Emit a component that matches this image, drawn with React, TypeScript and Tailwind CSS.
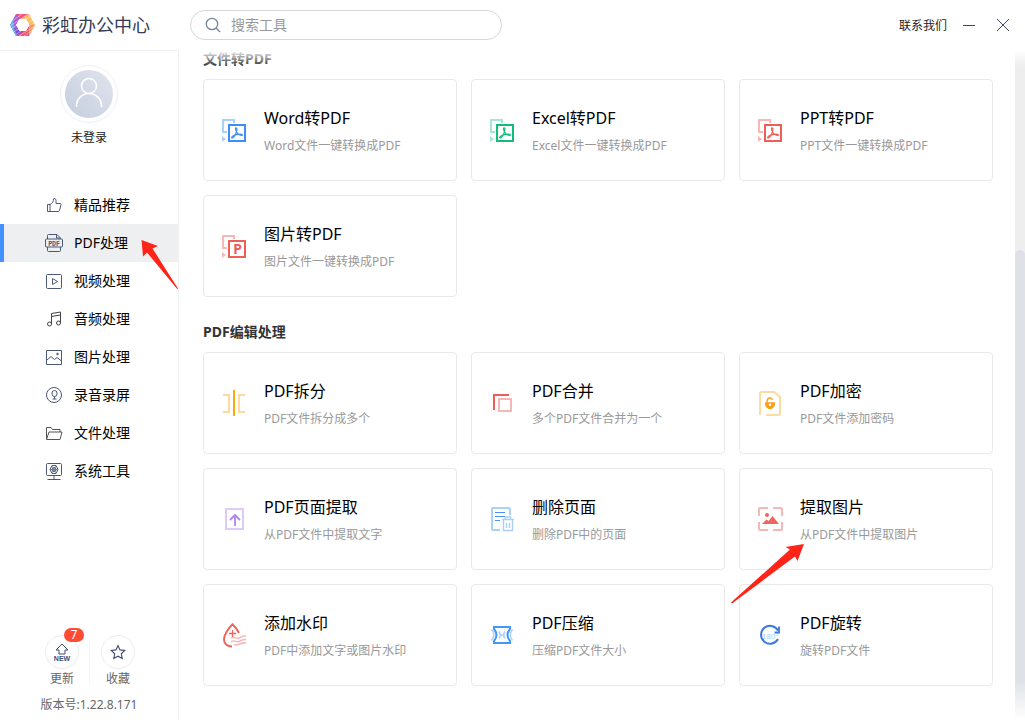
import React from "react";

type IconProps = { children: React.ReactNode };

function ToolIcon({ children }: IconProps) {
  return (
    <svg className="mt-[11px] size-[26px] shrink-0" viewBox="0 0 26 26" fill="none" aria-hidden="true">
      {children}
    </svg>
  );
}

function NavIcon({ children }: IconProps) {
  return (
    <svg className="size-[18px] shrink-0" viewBox="0 0 18 18" fill="none" stroke="#4b5877" strokeWidth="1" aria-hidden="true">
      {children}
    </svg>
  );
}

function ConvertIcon({ color, light, letter }: { color: string; light: string; letter?: boolean }) {
  return (
    <ToolIcon>
      <path d="M5 15H1V3h11v3" stroke={light} strokeWidth="2" />
      <path d="M0 19l4 3-4 3z" fill={light} />
      <rect x="7" y="8" width="16" height="16" stroke={color} strokeWidth="2" />
      {letter ? (
        <text x="15.500" y="21" textAnchor="middle" fill={color} fontSize="14" fontWeight="700" fontFamily="Noto Sans, sans-serif">P</text>
      ) : (
        <path
          d="M14 10.800c1.700 0 .9 3.300-.2 5.600-1.100 2.400-2.700 4.800-3.800 4.600-1.200-.3.500-2.300 3.600-3.200 3-.9 6.800-1.100 6.800.1 0 1.300-3.300.3-5-1.800-1.500-1.900-2.500-5.300-1.400-5.300z"
          stroke={color}
          strokeWidth="1.200"
        />
      )}
    </ToolIcon>
  );
}

function SplitIcon() {
  return (
    <ToolIcon>
      <path d="M1 5h6v17H1M23 5h-6v17h6" stroke="#fddba0" strokeWidth="2" />
      <path d="M12 0v26" stroke="#f8ab10" strokeWidth="2" />
    </ToolIcon>
  );
}

function MergeIcon() {
  return (
    <ToolIcon>
      <path d="M4 20V5h15" stroke="#ee5d56" strokeWidth="2" />
      <rect x="9" y="9" width="12" height="12" stroke="#f8b7b7" strokeWidth="2" />
    </ToolIcon>
  );
}

function EncryptIcon() {
  return (
    <ToolIcon>
      <path d="M2 24V3.500Q2 2 3.500 2H16l6 5v16.500q0 1.500-1.500 1.500H9" stroke="#fddba0" strokeWidth="2" strokeLinecap="round" />
      <path d="M9.200 12.500v-1.800c0-3.300 4.800-3.500 5.300-.7" stroke="#fb9f13" strokeWidth="1.400" />
      <path fillRule="evenodd" d="M7 12.200h10v1.600a5 5.400 0 0 1-10 0zM12 13.500a1.300 1.300 0 1 0 0 2.600 1.300 1.300 0 0 0 0-2.600z" fill="#fb9f13" />
    </ToolIcon>
  );
}

function ExtractPageIcon() {
  return (
    <ToolIcon>
      <rect x="4" y="3" width="17" height="20" stroke="#dfcafa" strokeWidth="2" />
      <path d="M13 20V9.500M8 14l5-5 5 5" stroke="#b383f3" strokeWidth="1.800" />
    </ToolIcon>
  );
}

function DeletePageIcon() {
  return (
    <ToolIcon>
      <path d="M10 24H3q-1 0-1-1V3q0-1 1-1h16q1 0 1 1v6" stroke="#a9d0fa" strokeWidth="2" />
      <path d="M5 6.500h10M5 10.500h10M5 14.500h5" stroke="#4a90f5" strokeWidth="1.200" />
      <path d="M12 13.500h12M15.500 13v-2h5v2M13.500 14v10.500h9V14M16.500 17v5M19.500 17v5" stroke="#a9d0fa" strokeWidth="1.400" />
    </ToolIcon>
  );
}

function ExtractImageIcon() {
  return (
    <ToolIcon>
      <path d="M1 10V3q0-1 1-1h8M15 2h8q1 0 1 1v7M24 16v7q0 1-1 1h-8M10 24H2q-1 0-1-1v-7" stroke="#f8b7b7" strokeWidth="2" />
      <circle cx="9" cy="9" r="2" fill="#f0655c" />
      <path d="M4 18l4.500-4.500 2 1.500L14.500 10l6.500 8z" fill="#f0655c" />
    </ToolIcon>
  );
}

function WatermarkIcon() {
  return (
    <ToolIcon>
      <path d="M10 24.500C5 24.500 2 21.500 2 17.500 2 13 6.500 6 10.500 2.200 13 4.500 15.500 8 17 11" stroke="#f0625a" strokeWidth="1.900" />
      <path d="M10.500 8v7M7 11.500h7" stroke="#f0625a" strokeWidth="1.300" />
      <path d="M9 16c4-1.500 5 1 8 0s3-2.500 7-2M9 19.500c4-1.500 5 1 8 0s3-2.500 7-2M12 23c3-.5 4 0 6-1s3-1.500 6-1" stroke="#f8b7b7" strokeWidth="1.500" />
    </ToolIcon>
  );
}

function CompressIcon() {
  return (
    <ToolIcon>
      <path d="M1.500 7.500q4.500 5.500 0 11M22.500 7.500q-4.500 5.500 0 11M9 9.500q2.500 3.500 0 7M15 9.500q-2.500 3.500 0 7M10.500 13h3" stroke="#a9d0fa" strokeWidth="1.500" />
      <path d="M4 5h16v2q-5 6 0 12v2H4v-2q5-6 0-12z" stroke="#4397f7" strokeWidth="2" />
    </ToolIcon>
  );
}

function RotateIcon() {
  return (
    <ToolIcon>
      <text x="4" y="16.500" fill="#a9d0fa" fontSize="8" fontFamily="Liberation Sans, sans-serif">180°</text>
      <path d="M20 8.500A9 9 0 1 0 20 17" stroke="#3b78e7" strokeWidth="2" />
      <path d="M21 4.500v7M21.500 10.500h-5" stroke="#3b78e7" strokeWidth="1.800" />
    </ToolIcon>
  );
}

function Logo() {
  return (
    <svg className="h-[22px] w-[25px] shrink-0" viewBox="0 0 25 22" fill="none" aria-hidden="true">
      <path d="M6 0h13l-3 5H9.500L6.500 9z" fill="#f0577c" />
      <path d="M19 0l6 11-4.500 2.500L16 5h-5z" fill="#fbbd62" />
      <path d="M25 11l-6 11h-4l.5-5 3.500-7z" fill="#f9965a" />
      <path d="M19 22H6l3-5h7l3-5z" fill="#ef5270" />
      <path d="M6 22L0 11l5-2 4.500 8h4z" fill="#7a4de0" />
      <path d="M0 11L6 0l3.500 5L6 11.500 8 17z" fill="#a95bd8" />
      <path d="M0 11l3-5.500 1 9 3 7.500H6z" fill="#56b8f0" />
      <path d="M0 8.500L12 0M0 12L18 0M1 15L22 1M3 18.500L24 5M5 21l20-13M9 22l16-10M14 22l10-7" stroke="#fff" strokeWidth=".7" opacity=".6" />
      <path d="M9.500 5H16l3.500 6-3.500 6H9.500L6 11z" fill="#fff" />
    </svg>
  );
}

const navItems: { label: string; active?: boolean; icon: React.ReactNode }[] = [
  {
    label: "精品推荐",
    icon: <path d="M2.500 8.500h2.500v7H2.500zM5 8.500c2.500-1 3.500-3 3.500-5.500 0-1 2.500-1 2.500 1.500V7.500h4q1 0 1 1l-1.500 6q-.3 1-1.500 1H5" />,
  },
  {
    label: "PDF处理",
    active: true,
    icon: (
      <>
        <path d="M2.500 5V1.500q0-1 1-1H12l3.500 3.500v1M11.500.5V4H15M2.500 13v3.500q0 1 1 1h11q1 0 1-1V13" />
        <rect x=".5" y="5" width="17" height="8" rx="1" />
        <text x="9" y="11.500" textAnchor="middle" fill="#4b5877" stroke="none" fontSize="6.500" fontWeight="700" fontFamily="Liberation Mono, monospace">PDF</text>
      </>
    ),
  },
  {
    label: "视频处理",
    icon: (
      <>
        <rect x="1.500" y="2.500" width="15" height="14" rx="1" />
        <path d="M7.500 6.500v6l5-3z" />
      </>
    ),
  },
  {
    label: "音频处理",
    icon: (
      <g stroke="#444">
        <path d="M6.500 13.500v-10l9-1.500v10.500M6.500 6.500l9-1.500" />
        <circle cx="4.500" cy="14" r="2" />
        <circle cx="13.500" cy="13" r="2" />
      </g>
    ),
  },
  {
    label: "图片处理",
    icon: (
      <>
        <path d="M1.500 2.500h15v14h-15zM2 12l4-3.500 3.500 3 2.500-2 4.500 3.500" />
        <circle cx="12.500" cy="6" r=".8" fill="#4b5877" />
      </>
    ),
  },
  {
    label: "录音录屏",
    icon: (
      <>
        <circle cx="9" cy="9" r="7.500" />
        <rect x="7" y="4.500" width="5" height="6" rx="2.500" />
        <path d="M9.500 10.500v2.500M7.500 13h4" />
      </>
    ),
  },
  {
    label: "文件处理",
    icon: <path stroke="#555" d="M1.500 15V3.500h4.500l1.500 2h7.500V8M1.500 15.500l2.500-7.500h13l-2 7.500z" />,
  },
  {
    label: "系统工具",
    icon: (
      <>
        <rect x="1.500" y="1.500" width="15" height="12" rx="1" />
        <path d="M9 13.500v3.500M2.500 17.500h13M7 3.500h4l2 4-2 4H7l-2-4z" />
        <circle cx="9" cy="7.500" r="2" />
        <path d="M5 7.500h8M7 4l4 7M11 4l-4 7" strokeWidth=".6" />
      </>
    ),
  },
];

type Tool = { title: string; desc: string; icon: React.ReactNode; pointed?: boolean };

const convertTools: Tool[] = [
  { title: "Word转PDF", desc: "Word文件一键转换成PDF", icon: <ConvertIcon color="#3b8ff5" light="#a9d0fa" /> },
  { title: "Excel转PDF", desc: "Excel文件一键转换成PDF", icon: <ConvertIcon color="#12bd7c" light="#a6e6cc" /> },
  { title: "PPT转PDF", desc: "PPT文件一键转换成PDF", icon: <ConvertIcon color="#ee5d56" light="#f8b7b7" /> },
  { title: "图片转PDF", desc: "图片文件一键转换成PDF", icon: <ConvertIcon color="#ee5d56" light="#f8b7b7" letter /> },
];

const editTools: Tool[] = [
  { title: "PDF拆分", desc: "PDF文件拆分成多个", icon: <SplitIcon /> },
  { title: "PDF合并", desc: "多个PDF文件合并为一个", icon: <MergeIcon /> },
  { title: "PDF加密", desc: "PDF文件添加密码", icon: <EncryptIcon /> },
  { title: "PDF页面提取", desc: "从PDF文件中提取文字", icon: <ExtractPageIcon /> },
  { title: "删除页面", desc: "删除PDF中的页面", icon: <DeletePageIcon /> },
  { title: "提取图片", desc: "从PDF文件中提取图片", icon: <ExtractImageIcon />, pointed: true },
  { title: "添加水印", desc: "PDF中添加文字或图片水印", icon: <WatermarkIcon /> },
  { title: "PDF压缩", desc: "压缩PDF文件大小", icon: <CompressIcon /> },
  { title: "PDF旋转", desc: "旋转PDF文件", icon: <RotateIcon /> },
];

function ToolCard({ tool }: { tool: Tool }) {
  return (
    <button type="button" className="relative flex items-start gap-4 rounded border border-[#e9e9ea] bg-white pt-[26px] pb-[25px] pl-[18px] text-left">
      {tool.icon}
      <span className="flex flex-col gap-[7px]">
        <span className="text-base leading-6 text-black">{tool.title}</span>
        <span className="text-xs leading-[18px] text-[#999]">{tool.desc}</span>
      </span>
      {tool.pointed && (
        <svg className="pointer-events-none absolute top-[75px] -left-[9px] z-10 h-[60px] w-[73px]" viewBox="0 0 73 60" aria-hidden="true">
          <path d="M73 0L54.500 3l4.500 2.500L0 58.500l1 1L64 12.500l2.500 4.500z" fill="#ff2418" />
        </svg>
      )}
    </button>
  );
}

function Section({ title, tools }: { title: string; tools: Tool[] }) {
  return (
    <section>
      <h2 className="mb-[11px] text-sm leading-[18px] font-bold text-[#333]">{title}</h2>
      <div className="grid grid-cols-3 gap-3.5">
        {tools.map((tool) => (
          <ToolCard key={tool.title} tool={tool} />
        ))}
      </div>
    </section>
  );
}

export default function App() {
  return (
    <div className="flex h-screen flex-col overflow-hidden bg-white font-['Noto_Sans','Noto_Sans_CJK_SC',sans-serif]">
      <header className="flex h-[50px] shrink-0 items-center justify-between pr-4 pl-2.5">
        <div className="flex items-center">
          <div className="flex w-[180px] items-center gap-[7px]">
            <Logo />
            <h1 className="text-lg leading-6 text-[#323c56]">彩虹办公中心</h1>
          </div>
          <label className="flex h-[30px] w-[312px] items-center gap-2.5 rounded-full border border-[#d5d7da] pl-3.5">
            <svg className="size-4 shrink-0" viewBox="0 0 16 16" fill="none" stroke="#76839d" strokeWidth="1.300" aria-hidden="true">
              <circle cx="7" cy="7" r="5.700" />
              <path d="M11 11l4 4" />
            </svg>
            <input type="text" aria-label="搜索工具" placeholder="搜索工具" className="w-full bg-transparent text-sm leading-5 outline-none placeholder:text-[#999]" />
          </label>
        </div>
        <div className="flex items-center gap-4">
          <a href="#contact" className="pt-0.5 text-xs leading-5 text-[#222]">联系我们</a>
          <button type="button" aria-label="最小化">
            <svg className="h-3 w-3" viewBox="0 0 12 12" stroke="#3b4560" aria-hidden="true"><path d="M0 6.500h12" /></svg>
          </button>
          <button type="button" aria-label="关闭" className="ml-1.5">
            <svg className="h-3 w-3" viewBox="0 0 12 12" stroke="#3b4560" aria-hidden="true"><path d="M0 0l12 12M12 0L0 12" /></svg>
          </button>
        </div>
      </header>

      <div className="flex min-h-0 flex-1">
        <aside className="flex w-[179px] shrink-0 flex-col border-t border-r border-[#f0f1f3]">
          <div className="flex flex-col items-center pt-3.5">
            <div className="rounded-full border border-[#edf0f7] p-1">
              <svg className="size-12" viewBox="0 0 48 48" fill="none" aria-hidden="true">
                <defs>
                  <linearGradient id="avatar" x1="1" y1="0" x2="0" y2="1">
                    <stop stopColor="#e0e4ee" />
                    <stop offset="1" stopColor="#c5cddd" />
                  </linearGradient>
                </defs>
                <circle cx="24" cy="24" r="24" fill="url(#avatar)" />
                <circle cx="24" cy="16" r="7.500" stroke="#fff" strokeWidth="1.600" />
                <path d="M11.500 37v-1a12.500 12.500 0 0 1 25 0v1" stroke="#fff" strokeWidth="1.600" />
              </svg>
            </div>
            <p className="mt-[5px] text-xs leading-5 text-[#222]">未登录</p>
          </div>

          <nav className="mt-[38px]">
            {navItems.map((item) => (
              <a
                key={item.label}
                href="#tools"
                className={
                  item.active
                    ? "relative flex h-[38px] items-center gap-[11px] border-l-4 border-[#4391ff] bg-[#eeeff1] pl-[41px] text-sm text-black"
                    : "flex h-[38px] items-center gap-[11px] pl-[45px] text-sm text-black"
                }
              >
                <NavIcon>{item.icon}</NavIcon>
                <span>{item.label}</span>
                {item.active && (
                  <svg className="pointer-events-none absolute top-4 right-0 z-10 h-[50px] w-[37px]" viewBox="0 0 37 50" aria-hidden="true">
                    <path d="M0.500 0l16.500 6-5.500 2.500L37 48.500l-.8.5L6 12.500 2 16.500z" fill="#ff2418" />
                  </svg>
                )}
              </a>
            ))}
          </nav>

          <div className="mt-auto flex flex-col pb-1.5 text-xs leading-[18px] text-[#666]">
            <div className="flex items-center pl-[45px]">
              <button type="button" className="relative flex w-[34px] flex-col items-center gap-px">
                <span className="flex size-[34px] items-center justify-center rounded-full border border-[#ececef]">
                  <svg className="h-5 w-[18px]" viewBox="0 0 18 20" fill="none" stroke="#3f4c70" aria-hidden="true">
                    <path d="M9 2l6 6h-3v4H6V8H3z" />
                    <text x="9" y="19" textAnchor="middle" fill="#3f4c70" stroke="none" fontSize="7" fontWeight="700" fontFamily="Liberation Sans, sans-serif">NEW</text>
                  </svg>
                </span>
                <span>更新</span>
                <span className="absolute -top-[7px] left-[19px] flex h-3.5 w-5 items-center justify-center rounded-full bg-[#ff4b33] text-xs leading-[14px] text-white">7</span>
              </button>
              <span className="mr-[11px] ml-2.5 h-11 w-px bg-[#f4f4f6]" />
              <button type="button" className="flex w-[34px] flex-col items-center gap-px">
                <span className="flex size-[34px] items-center justify-center rounded-full border border-[#ececef]">
                  <svg className="size-4" viewBox="0 0 16 16" fill="none" stroke="#3f4c70" strokeWidth="1.100" aria-hidden="true">
                    <path d="M8 1.500l2 4.400 4.800.6-3.500 3.300.9 4.700L8 12.200l-4.200 2.300.9-4.700L1.200 6.500 6 5.900z" />
                  </svg>
                </span>
                <span>收藏</span>
              </button>
            </div>
            <p className="mt-2 text-center">版本号:1.22.8.171</p>
          </div>
        </aside>

        <main className="relative flex min-w-0 flex-1">
          <div className="flex min-w-0 flex-1 flex-col gap-[26px] overflow-hidden pr-[22px] pl-6">
            <Section title="文件转PDF" tools={convertTools} />
            <Section title="PDF编辑处理" tools={editTools} />
          </div>
          <div className="flex w-2.5 shrink-0 flex-col bg-[#eee] pt-[200px]">
            <div className="flex-1 rounded-t-full bg-[#dfe1e6]" />
          </div>
          <div className="pointer-events-none absolute inset-x-0 top-0 h-4 bg-linear-to-b from-white to-transparent" />
          <div className="pointer-events-none absolute right-0 bottom-0 h-10 w-2.5 bg-linear-to-t from-white to-transparent" />
        </main>
      </div>
    </div>
  );
}
